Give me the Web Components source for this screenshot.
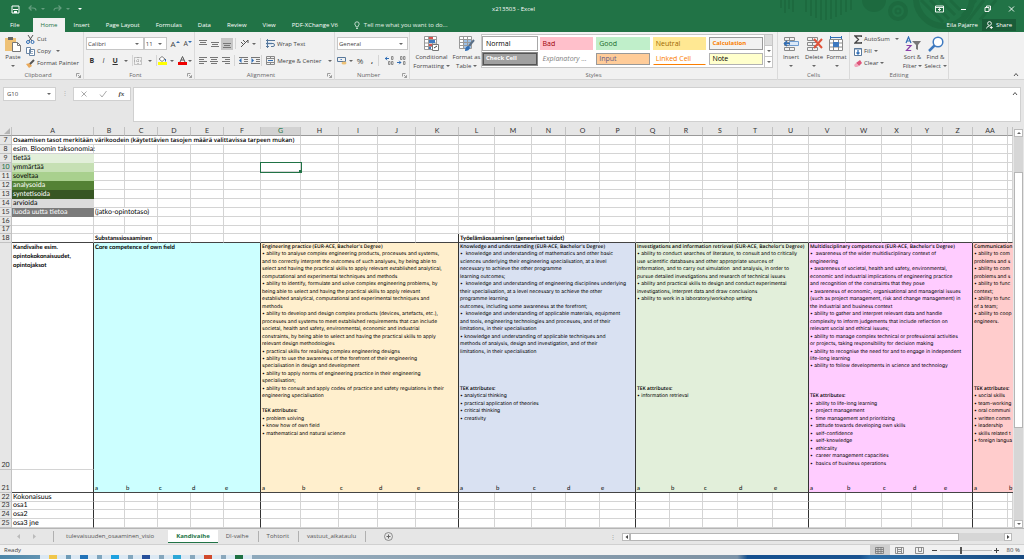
<!DOCTYPE html>
<html lang="fi">
<head>
<meta charset="utf-8">
<title>x213503 - Excel</title>
<style>
html,body{margin:0;height:100%}
body{font-family:"Open Sans","Noto Sans",sans-serif;font-size:6px;line-height:8px;color:#444;background:#e6e6e6;overflow:hidden}
</style>
</head>
<body>
<excel-app></excel-app>
<script>
const define = (name, css, html) => customElements.define(name, class extends HTMLElement {
  constructor() {
    super();
    const root = this.attachShadow({ mode: 'open' });
    const t = document.createElement('template');
    t.innerHTML = '<style>*{box-sizing:border-box}button,input,select{font:inherit;color:inherit;background:none;border:0;margin:0;padding:0;border-radius:0;outline:0}svg{display:block;flex:none}' + css + '</style>' + (typeof html === 'function' ? html(this) : html);
    root.append(t.content.cloneNode(true));
  }
});
const svg = (w, h, body, slot) => `<svg ${slot ? 'slot="icon" ' : ''}width="${w}" height="${h}" viewBox="0 0 ${w} ${h}" fill="none" aria-hidden="true">${body}</svg>`;
const lines = (c, list) => `<path stroke="${c}" d="${list.map(([x, y, w]) => `M${x} ${y}.5h${w}`).join('')}"/>`;

/* ---------- small parts ---------- */
define('down-caret', ':host{display:inline-block;border:solid transparent;border-width:2px 2px 0;border-top-color:#666;width:0;height:0;flex:none;vertical-align:middle}', '');

define('big-button',
  ':host{display:block}button{display:flex;flex-direction:column;align-items:center;width:100%;padding-top:4px;line-height:9px;text-align:center;white-space:nowrap;gap:1px}',
  '<button type="button"><slot name="icon"></slot><span><slot></slot></span></button>');

define('tool-button',
  ':host{display:flex;align-items:center;height:12px}button{display:flex;align-items:center;gap:2px;height:12px;white-space:nowrap}:host([trailing]) button{flex-direction:row-reverse;gap:0}',
  '<button type="button"><slot name="icon"></slot><slot></slot></button>');

define('ribbon-group',
  ':host{display:flex;flex-direction:column;border-right:1px solid #dadada;height:48px}div{flex:1;display:flex;min-height:0}footer{height:9px;line-height:9px;text-align:center;color:#666;display:flex;align-items:center}span{flex:1;white-space:nowrap}svg{margin-right:2px}',
  el => `<div><slot></slot></div><footer><span>${el.getAttribute('label')}</span>${el.hasAttribute('launcher') ? svg(5, 5, '<path stroke="#888" stroke-width=".8" d="M.5 3.500V.5H3.500M2 2l2.500 2.500M4.500 2.200V4.500H2.200"/>') : ''}</footer>`);

define('combo-box',
  ':host{display:flex;height:13px;background:#fff;border:1px solid #c6c6c6;align-items:center;padding-right:4px}select{appearance:none;flex:1;min-width:0;padding-left:1px;height:11px}',
  el => `<select aria-label="${el.getAttribute('label')}"><option>${el.getAttribute('value')}</option></select><down-caret></down-caret>`);

/* ---------- title bar ---------- */
define('title-bar', `
:host{display:flex;height:18px;align-items:center;color:#fff;position:relative}
.q,.w{flex:1;display:flex;align-items:center}
.q{padding-left:11px;gap:8px}.w{justify-content:flex-end;gap:15px;padding-right:8px}
.u{display:flex;align-items:center;gap:4px;opacity:.3}
.u down-caret,.q>down-caret{border-top-color:#fff}
h1{font:inherit;margin:0}button{display:flex}`, `
<div class="q">
<button type="button" aria-label="Save">${svg(9, 9, '<path stroke="#fff" d="M1 1h7v7H1z"/><path fill="#fff" d="M2 4h5v1H2zM3 6h3v2H3z"/>')}</button>
<button class="u" type="button" aria-label="Undo">${svg(9, 8, '<path stroke="#fff" stroke-width="1.200" d="M1 3h4q3 0 3 2.500M3.500.5L1 3l2.500 2.500"/>')}<down-caret></down-caret></button>
<button class="u" type="button" aria-label="Redo">${svg(9, 8, '<path stroke="#fff" stroke-width="1.200" d="M8 3H4q-3 0-3 2.500M5.500.5L8 3 5.500 5.500"/>')}<down-caret></down-caret></button>
<down-caret></down-caret></div>
<h1>x213503 - Excel</h1>
<div class="w">
<button type="button" aria-label="Ribbon options">${svg(9, 8, '<path stroke="#fff" stroke-width=".9" d="M.5 1h8v6h-8zM.5 2.500h8M4.500 6V3.500M3 5l1.500-1.500L6 5"/>')}</button>
<button type="button" aria-label="Minimise">${svg(9, 8, '<path stroke="#fff" d="M2 4.500h5"/>')}</button>
<button type="button" aria-label="Restore">${svg(9, 8, '<path stroke="#fff" stroke-width=".9" d="M2 2.500h4v4H2zM3.500 2.500V1h4v4H6"/>')}</button>
<button type="button" aria-label="Close">${svg(9, 8, '<path stroke="#fff" stroke-width=".9" d="M2 1.500l5 5M7 1.500l-5 5"/>')}</button></div>`);

define('ribbon-tabs', `
:host{display:flex;height:14px;align-items:stretch;color:#fff;position:relative;line-height:14px;padding-right:8px}
button{padding:0 8px;white-space:nowrap}
.f{padding:0 13px 0 10px}.on{background:#f1f1f1;color:#217346;padding:0 8px}
.tell{display:flex;align-items:center;gap:4px;flex:1;color:#e2efe7}
.s{background:#1a5c38;display:flex;align-items:center;gap:3px;margin:1px 0 1px 4px;padding:0 4px}`, `
<button class="f" type="button">File</button><button class="on" type="button">Home</button>
${['Insert', 'Page Layout', 'Formulas', 'Data', 'Review', 'View', 'PDF-XChange V6'].map(t => `<button type="button">${t}</button>`).join('')}
<button class="tell" type="button">${svg(6, 9, '<path stroke="#e2efe7" stroke-width=".8" d="M2 6V5Q.8 4 .8 3a2.200 2.200 0 014.400 0Q5.200 4 4 5v1zM2 7.500h2"/>')}Tell me what you want to do...</button>
<button type="button" style="padding-right:0">Eila Pajarre</button>
<button class="s" type="button">${svg(7, 8, '<circle cx="3.500" cy="2.500" r="1.900" stroke="#fff" stroke-width=".9"/><path stroke="#fff" stroke-width=".9" d="M.5 7.500Q1 5 3.500 5M3.800 6.500h3M5.300 5v3"/>')}Share</button>`);

define('app-header', `
:host{display:block;background:#217346;position:relative}
svg.art{position:absolute;right:0;top:0}`, `
<svg class="art" width="260" height="32" viewBox="764 0 260 32" fill="none" stroke="#1d6a3f" aria-hidden="true">
<path stroke-width="2" d="M781 0v8M785 0v13M789 0v9M793 0v12M806 0v12M811 0v16M816 0v18M821 0v20M826 0v20M831 0v19M836 0v17M841 0v15M846 0v12M851 0v10"/>
<path fill="#1d6a3f" stroke="none" d="M862 0h24a12 12 0 01-24 0z"/><circle cx="898" cy="11" r="8" stroke-width="4"/><circle cx="898" cy="11" r="2.500" stroke-width="2"/>
<circle cx="944" cy="-2" r="28" stroke-width="6"/><path stroke-width="3" d="M921 0l22 22M930 0l19 19M940 0l15 15M950 0l10 10"/>
<path stroke-width="3" d="M976 0l-14 16M984 0l-20 26M996 0l-16 20"/></svg>
<title-bar></title-bar><ribbon-tabs></ribbon-tabs>`);

/* ---------- ribbon ---------- */
const gridIcon = (extra) => svg(17, 16, '<path stroke="#8a8a8a" d="M1.500 1.500h10v3h-10zM6.500 1.500v3M1.500 11.500h10v3h-10zM6.500 11.500v3M1.500 6.500h10v3h-10zM6.500 6.500v3"/>' + extra, 1);
define('style-gallery', `
:host{display:flex;flex:1;height:34px;margin:2px 4px 0 1px;border:1px solid #c6c6c6;background:#fff}
.g{flex:1;display:grid;grid-template-columns:repeat(5,1fr);gap:3px;padding:2px 1px;font-size:7px}
.g button{text-align:left;padding-left:2px;line-height:9px;white-space:nowrap;border:1px solid transparent;overflow:hidden}
.n{outline:1px solid #a8a8a8;color:#000}.bad{background:#ffc0cb;color:#9c0006}.good{background:#c0efca;color:#1b6b2a}.neu{background:#ffe893;color:#9c6500}
.g .cal{background:#f2f2f2;color:#fa7d00;border-color:#9a9a9a;font-weight:bold;font-size:6px}
.g .chk{background:#a0a0a0;color:#fff;border-color:#555;outline:1px solid #888;font-weight:bold;font-size:6px}
.exp{font-style:italic;color:#7f7f7f;font-size:7px}.g .inp{background:#ffcc99;color:#5f5a86;border-color:#999}
.g .lnk{color:#fa7d00;border-bottom-color:#fa7d00}.g .nte{background:#ffffcc;border-color:#b2b2b2;color:#000}
.s{width:8px;border-left:1px solid #c6c6c6;display:flex;flex-direction:column}
.s button{flex:1;display:flex;align-items:center;justify-content:center;border-bottom:1px solid #c6c6c6}
.s button:first-child{background:#ddd}.s button:last-child{border:0}`, `
<div class="g">${[['n', 'Normal'], ['bad', 'Bad'], ['good', 'Good'], ['neu', 'Neutral'], ['cal', 'Calculation'], ['chk', 'Check Cell'], ['exp', 'Explanatory ...'], ['inp', 'Input'], ['lnk', 'Linked Cell'], ['nte', 'Note']].map(([c, t]) => `<button type="button" class="${c}">${t}</button>`).join('')}</div>
<div class="s"><button type="button" aria-label="Previous styles"></button><button type="button" aria-label="Next styles"><down-caret></down-caret></button><button type="button" aria-label="More styles"><down-caret></down-caret></button></div>`);

define('excel-ribbon', `
:host{display:flex;background:#f1f1f1;height:48px;border-bottom:1px solid #d5d5d5}
.clip{width:84px}.font{width:111px}.al{width:140px}.num{width:75px}.sty{flex:1}.cells{width:72px}.edit{width:99px}
.tail{width:75px;display:flex;align-items:flex-end;justify-content:flex-end;padding:0 5px 2px}
.col{display:flex;flex-direction:column;padding-top:1px}
.rows{flex:1;display:flex;flex-direction:column;padding:5px 2px 0 2px;gap:4px;min-width:0}
.r{display:flex;align-items:center;height:13px}
i.v{width:1px;height:11px;background:#d5d5d5}
b.t,em.t,u.t{font-size:7px;width:12px;text-align:center;color:#333}
.w12{width:12px;display:flex;justify-content:center}`, `
<ribbon-group class="clip" label="Clipboard" launcher>
<big-button style="width:26px">${svg(16, 16, '<path fill="#eec176" d="M0 2h11v13H0z"/><path fill="#666" d="M3 1h5v3H3z"/><path fill="#fff" stroke="#777" d="M7.500 6.500h5l3 3v6h-8z"/><path stroke="#777" d="M12.500 6.500v3h3"/>', 1)}Paste<br><down-caret></down-caret></big-button>
<div class="col">
<tool-button>${svg(9, 9, '<path stroke="#555" d="M2 0l4 6M7 0L3 6"/><circle cx="2" cy="7" r="1.500" stroke="#2f6db5"/><circle cx="6.500" cy="7" r="1.500" stroke="#2f6db5"/>', 1)}Cut</tool-button>
<tool-button>${svg(9, 9, '<path fill="#fff" stroke="#6a86a5" d="M.5.5h4v6h-4zM3.500 2.500h5v6h-5z"/><path stroke="#6a86a5" stroke-width=".7" d="M5 4.500h2M5 6.500h2"/>', 1)}Copy&nbsp;&nbsp;<down-caret></down-caret></tool-button>
<tool-button>${svg(9, 9, '<path fill="#e9a95b" d="M0 5l4-1 2 3-3 2z"/><path stroke="#555" stroke-width="2" d="M4 5l4-4"/>', 1)}Format Painter</tool-button></div>
</ribbon-group>
<ribbon-group class="font" label="Font" launcher><div class="rows">
<div class="r"><combo-box label="Font" value="Calibri" style="width:59px"></combo-box><combo-box label="Font size" value="11" style="width:23px"></combo-box>
<tool-button trailing style="margin-left:4px;font-size:8px">${svg(4, 8, '<path fill="#2f6db5" d="M0 3l2-2 2 2z"/>', 1)}A</tool-button><tool-button trailing style="margin-left:4px;font-size:7px">${svg(4, 8, '<path fill="#2f6db5" d="M0 1h4L2 3z"/>', 1)}A</tool-button></div>
<div class="r"><b class="t">B</b><em class="t">I</em><u class="t"><b>U</b></u><span class="w12" style="width:11px"><down-caret></down-caret></span><i class="v"></i>
<span class="w12">${svg(8, 8, '<path stroke="#999" stroke-dasharray="1 1" d="M.5.5h7v7h-7zM4 0v8M0 4h8"/>')}</span><span class="w12"><down-caret></down-caret></span><i class="v"></i>
<span class="w12">${svg(9, 9, '<path fill="#fff" stroke="#666" stroke-width=".8" d="M1 3l3-2.500L7 3 4 5.500z"/><path stroke="#2f6db5" d="M7.500 3v2.500"/><path fill="#ff0" d="M0 6h9v3H0z"/>')}</span><span class="w12" style="width:8px"><down-caret></down-caret></span>
<span class="w12">${svg(9, 9, '<path stroke="#555" d="M2 6l2.500-5.500L7 6M3 4h3"/><path fill="#e00" d="M0 6h9v3H0z"/>')}</span><down-caret></down-caret></div>
</div></ribbon-group>
<ribbon-group class="al" label="Alignment" launcher><div class="rows">
<div class="r"><span class="w12">${svg(8, 8, lines('#777', [[0, 0, 8], [1, 2, 6], [0, 4, 8]]))}</span><span class="w12">${svg(8, 8, lines('#777', [[0, 2, 8], [1, 4, 6], [0, 6, 8]]))}</span><span class="w12" style="background:#c6c6c6;height:12px;align-items:center">${svg(8, 8, lines('#777', [[0, 3, 8], [1, 5, 6], [0, 7, 8]]))}</span>
<i class="v" style="margin:0 4px 0 2px"></i>${svg(9, 9, '<path stroke="#555" d="M1 8l7-7M8 1v3M1 3l3 3M3 1l3 3"/>')}<span class="w12" style="width:9px"><down-caret></down-caret></span><i class="v" style="margin:0 5px 0 2px"></i>
<tool-button>${svg(9, 9, '<path fill="#cfe0f2" d="M0 3h6v3H0z"/><path stroke="#58789b" d="M0 1.500h9M0 4.500h7q1.500 0 1.500 1.500T7 7.500H5M0 7.500h3M1.500 0v9"/>', 1)}Wrap Text</tool-button></div>
<div class="r"><span class="w12">${svg(8, 8, lines('#777', [[0, 0, 8], [0, 2, 5], [0, 4, 8], [0, 6, 5]]))}</span><span class="w12">${svg(8, 8, lines('#777', [[0, 0, 8], [1, 2, 6], [0, 4, 8], [1, 6, 6]]))}</span><span class="w12">${svg(8, 8, lines('#777', [[0, 0, 8], [3, 2, 5], [0, 4, 8], [3, 6, 5]]))}</span>
<i class="v" style="margin:0 3px 0 2px"></i><span class="w12">${svg(9, 8, lines('#777', [[0, 0, 9], [5, 2, 4], [5, 4, 4], [0, 6, 9]]) + '<path fill="#2f6db5" d="M0 3.500L2.500 1v5z"/>')}</span><span class="w12">${svg(9, 8, lines('#777', [[0, 0, 9], [5, 2, 4], [5, 4, 4], [0, 6, 9]]) + '<path fill="#2f6db5" d="M3 3.500L.5 1v5z"/>')}</span><i class="v" style="margin:0 4px 0 0"></i>
<tool-button>${svg(9, 9, '<path stroke="#888" d="M.5.5h8v8h-8zM0 2.500h9M0 6.500h9M4.500 0v2.500M4.500 6.500V9"/><path stroke="#2f6db5" d="M2 4.500h5"/>', 1)}Merge &amp; Center&nbsp;&nbsp;&nbsp;<down-caret></down-caret></tool-button></div>
</div></ribbon-group>
<ribbon-group class="num" label="Number" launcher><div class="rows" style="padding-right:1px">
<combo-box label="Number format" value="General"></combo-box>
<div class="r">${svg(10, 9, '<path stroke="#58789b" d="M.5 1.500h8v4h-8z"/><path fill="#fff" stroke="#2f6db5" stroke-width=".8" d="M3.500 3.500h1.500"/><ellipse cx="7" cy="7" rx="2.500" ry="1.500" fill="#eec176"/>')}<span class="w12" style="width:7px"><down-caret></down-caret></span><span class="w12" style="font-size:8px">%</span><b class="t">,</b><i class="v" style="margin-right:4px"></i>
<span class="w12">${svg(9, 9, '<path stroke="#2f6db5" d="M0 2.500h4M2 .8L.4 2.500 2 4.200"/><path stroke="#777" stroke-width=".8" d="M6.500.5h1.500v3H6.500zM3.500 5.500h1.500v3H3.500zM6.500 5.500h1.500v3H6.500z"/>')}</span><span class="w12">${svg(9, 9, '<path stroke="#2f6db5" d="M0 6.500h4M2.200 4.800l1.600 1.700-1.600 1.700"/><path stroke="#777" stroke-width=".8" d="M3.500.5h1.500v3H3.500zM6.500.5h1.500v3H6.500zM6.500 5.500h1.500v3H6.500z"/>')}</span></div>
</div></ribbon-group>
<ribbon-group class="sty" label="Styles">
<big-button style="width:43px">${svg(17, 16, '<path fill="#fff" stroke="#999" d="M1.500.5h12v13h-12zM5.500 0v14M9.500 0v14M1 3.500h13M1 7h13M1 10.500h13"/><path fill="#d9534f" d="M6 1h4v2H6zM6 8h3v2H6z"/><path fill="#3f7ac0" d="M6 4h6v3H6zM6 11h2v2H6z"/><path fill="#fff" stroke="#777" d="M9.500 8.500h6v6h-6z"/><path stroke="#444" d="M11 12l3-2"/>', 1)}Conditional<br>Formatting <down-caret></down-caret></big-button>
<big-button style="width:27px">${svg(17, 16, '<path fill="#fff" stroke="#999" d="M1.500.5h12v12h-12z"/><path fill="#9dc0e6" d="M5 4h8v8H5z"/><path stroke="#999" d="M5.500 0v13M9.500 0v13M1 3.500h13M1 6.500h13M1 9.500h13"/><path stroke="#5a6f87" stroke-width="2" d="M16 4l-5 6"/><path fill="#2f6db5" d="M7 15q0-5 4-5l1 2q-1 3-5 3z"/>', 1)}Format as<br>Table <down-caret></down-caret></big-button>
<style-gallery></style-gallery>
</ribbon-group>
<ribbon-group class="cells" label="Cells">
<big-button style="width:24px;margin-left:1px">${gridIcon('<path fill="#dbe9f8" stroke="#6f9cd0" d="M6.500 5.500h9v4h-9z"/><path stroke="#2f6db5" stroke-width="1.500" d="M1 7.500h6M4 5L1.500 7.500 4 10"/>')}Insert<br><down-caret></down-caret></big-button>
<big-button style="width:22px">${gridIcon('<path stroke="#e0533a" stroke-width="2" d="M8 3l8 9M16 3l-8 9"/>')}Delete<br><down-caret></down-caret></big-button>
<big-button style="width:23px">${svg(17, 16, '<path fill="#fff" stroke="#8a8a8a" d="M1.500 3.500h13v11h-13zM5.500 3v12M10.500 3v12M1 7h14M1 11h14"/><path fill="#3f7ac0" d="M5 6h6v5H5z"/><path stroke="#2f6db5" d="M2 1.500h12M2.500 0v3M13.500 0v3"/>', 1)}Format<br><down-caret></down-caret></big-button>
</ribbon-group>
<ribbon-group class="edit" label="Editing">
<div class="col" style="width:51px;padding-left:4px">
<tool-button>${svg(8, 9, '<path stroke="#444" stroke-width="1.300" d="M7.500 2V1H1l3.500 3.500L1 8h6.500V7"/>', 1)}AutoSum&nbsp;&nbsp;<down-caret></down-caret></tool-button>
<tool-button>${svg(8, 9, '<path fill="#fff" stroke="#58789b" d="M.5 1.500h7v7h-7zM0 2h8"/><path stroke="#2f6db5" stroke-width="1.300" d="M4 3v4M2.500 5.500L4 7l1.500-1.500"/>', 1)}Fill <down-caret></down-caret></tool-button>
<tool-button>${svg(8, 9, '<path fill="#e0557b" d="M2 4l4-3 2 3-3 3z"/><path fill="#f0a9bd" d="M0 6l2-2 3 3-2 1H1z"/>', 1)}Clear <down-caret></down-caret></tool-button></div>
<big-button style="width:23px">${svg(16, 16, '<path stroke="#2f6db5" stroke-width="1.200" d="M1 7l2.500-6L6 7M2 5h3"/><path stroke="#8b3fa8" stroke-width="1.200" d="M1.500 9.500H6L1.500 14.500H6.200"/><path fill="#777" d="M7 5h9l-3 4v5l-2-1V9z"/>', 1)}Sort &amp;<br>Filter <down-caret></down-caret></big-button>
<big-button style="width:23px">${svg(16, 16, '<circle cx="10" cy="6" r="4.800" fill="#fff" stroke="#3f7ac0" stroke-width="1.500"/><path stroke="#3f7ac0" stroke-width="2.500" d="M6.500 9.500L1 15"/>', 1)}Find &amp;<br>Select <down-caret></down-caret></big-button>
</ribbon-group>
<div class="tail">${svg(6, 5, '<path stroke="#555" d="M1 4l2-2.500L5 4"/>')}</div>`);

/* ---------- formula bar ---------- */
define('formula-bar', `
:host{display:flex;align-items:flex-start;padding:7px 3px 5px;color:#444}
.n{width:53px;height:14px;background:#fff;border:1px solid #d0d0d0;display:flex;align-items:center;padding:0 4px 0 3px}
.n input{flex:1;min-width:0}.d{width:17px;text-align:center;line-height:13px;color:#aaa}
.b{width:58px;height:14px;background:#fff;border:1px solid #d0d0d0;display:flex;justify-content:space-around;align-items:center}
.b button:last-child{font:italic 7px/9px "Liberation Serif",serif}
.f{flex:1;margin-left:2px;height:35px;background:#fff;border:1px solid #d0d0d0;display:flex;padding-right:2px}
.f input{flex:1}.f svg{margin-top:3px}`, `
<div class="n"><input aria-label="Name box" value="G10"><down-caret></down-caret></div><span class="d">⋮</span>
<div class="b"><button type="button" aria-label="Cancel">${svg(8, 8, '<path stroke="#aaa" d="M1.500 1.500l5 5M6.500 1.500l-5 5"/>')}</button><button type="button" aria-label="Enter">${svg(8, 8, '<path stroke="#aaa" d="M1 4.500L3 7l4.500-6"/>')}</button><button type="button" aria-label="Insert function"><b>fx</b></button></div>
<div class="f"><input aria-label="Formula">${svg(6, 5, '<path stroke="#555" d="M1 4l2-2.500L5 4"/>')}</div>`);

/* ---------- worksheet ---------- */
const COLS = [['', 12], ['A', 82], ['B', 31], ['C', 33], ['D', 33], ['E', 33], ['F', 37], ['G', 40], ['H', 38], ['I', 39], ['J', 38], ['K', 43], ['L', 36], ['M', 37], ['N', 34], ['O', 34], ['P', 36], ['Q', 34], ['R', 33], ['S', 35], ['T', 35], ['U', 36], ['V', 37], ['W', 36], ['X', 30], ['Y', 31], ['Z', 30], ['AA', 35], ['', 5]];
const EDGES = new Set([1, 6, 11, 16, 21, 26]);
const LEVELS = [['tietää', '#e2efda', '#000'], ['ymmärtää', '#c6e0b4', '#000'], ['soveltaa', '#a9d08e', '#000'], ['analysoida', '#548235', '#fff'], ['syntetisoida', '#375623', '#fff'], ['arvioida', '#dbdbdb', '#000'], ['luoda uutta tietoa', '#7b7b7b', '#fff']];
const AREAS = [
  { span: 5, color: '#ccffff', text: '' },
  { span: 5, color: '#ffefcd', text: `#Engineering practice (EUR-ACE, Bachelor's Degree)
• ability to analyse complex engineering products, processes and systems,
and to correctly interpret the outcomes of such analyses, by being able to
select and having the practical skills to apply relevant established analytical,
computational and experimental techniques and methods
• ability to identify, formulate and solve complex engineering problems, by
being able to select and having the practical skills to apply relevant
established analytical, computational and experimental techniques and
methods
• ability to develop and design complex products (devices, artefacts, etc.),
processes and systems to meet established requirements that can include
societal, health and safety, environmental, economic and industrial
constraints, by being able to select and having the practical skills to apply
relevant design methodologies
• practical skills for realising complex engineering designs
• ability to use the awareness of the forefront of their engineering
specialisation in design and development
• ability to apply norms of engineering practice in their engineering
specialisation;
• ability to consult and apply codes of practice and safety regulations in their
engineering specialisation

#TEK attributes:
• problem solving
• know how of own field
• mathematical and natural science` },
  { span: 5, color: '#d9e1f2', text: `#Knowledge and understanding (EUR-ACE, Bachelor's Degree)
•  knowledge and understanding of mathematics and other basic
sciences underlying their engineering specialisation, at a level
necessary to achieve the other programme
learning outcomes;
•  knowledge and understanding of engineering disciplines underlying
their specialisation, at a level necessary to achieve the other
programme learning
outcomes, including some awareness at the forefront;
•  knowledge and understanding of applicable materials, equipment
and tools, engineering technologies and processes, and of their
limitations, in their specialisation
• knowledge and understanding of applicable techniques and
methods of analysis, design and investigation, and of their
limitations, in their specialisation




#TEK attributes:
• analytical thinking
• practical application of theories
• critical thinking
• creativity` },
  { span: 5, color: '#e2efda', text: `#Investigations and information retrieval (EUR-ACE, Bachelor's Degree)
• ability to conduct searches of literature, to consult and to critically
use scientific databases and other appropriate sources of
information, and to carry out simulation  and analysis, in order to
pursue detailed investigations and research of technical issues
• ability and practical skills to design and conduct experimental
investigations, interpret data and draw conclusions
• ability to work in a laboratory/workshop setting











#TEK attributes:
• information retrieval` },
  { span: 5, color: '#ffccff', text: `#Multidisciplinary competences (EUR-ACE, Bachelor's Degree)
•  awareness of the wider multidisciplinary context of
engineering
• awareness of societal, health and safety, environmental,
economic and industrial implications of engineering practice
and recognition of the constraints that they pose
• awareness of economic, organisational and managerial issues
(such as project management, risk and change management) in
the industrial and business context
• ability to gather and interpret relevant data and handle
complexity to inform judgements that include reflection on
relevant social and ethical issues;
• ability to manage complex technical or professional activities
or projects, taking responsibility for decision making
• ability to recognise the need for and to engage in independent
life-long learning
• ability to follow developments in science and technology



#TEK attributes:
•  ability to life-long learning
•  project management
•  time management and prioritizing
•  attitude towards developing own skills
•  self-confidence
•  self-knowledge
•  ethicality
•  career management capacities
•  basics of business operations` },
  { span: 2, color: '#ffcccc', text: `#Communication
• ability to com
problems and s
• ability to com
problems and s
• ability to func
context;
• ability to func
of a team;
• ability to coop
engineers.








#TEK attributes:
• social skills
• team-working
• oral communi
• written comm
• leadership
• skills related t
• foreign langua` }];

const plainRow = (n, cells = {}) => {
  let out = `<tr class="r${n}"><th scope="row">${n}</th>`;
  for (let c = 1; c < COLS.length;) {
    const d = cells[c] || {}, span = d.span || 1, last = c + span - 1;
    out += `<td class="${d.cls || ''}${n > 21 && EDGES.has(last) || n === 18 && last === 11 ? ' e' : ''}"${span > 1 ? ` colspan="${span}"` : ''}${d.style ? ` style="${d.style}"` : ''}>${d.t || ''}</td>`;
    c += span;
  }
  return out + '</tr>';
};
const note = a => a.text.split('\n').map(l => l[0] === '#' ? `<b>${l.slice(1)}</b>` : `<span>${l}</span>`).join('');
const buildTable = () => {
  let rows = plainRow(7, { 1: { span: 7, cls: 'h', t: 'Osaamisen tasot merkitään värikoodein (käytettävien tasojen määrä valittavissa tarpeen mukan)' } });
  rows += plainRow(8, { 1: { t: 'esim. Bloomin taksonomia:' } });
  LEVELS.forEach(([t, bg, fg], i) => {
    const cells = { 1: { t, style: `background:${bg};color:${fg};border-color:${bg}` } };
    if (i === 1) cells[7] = { cls: 'sel' };
    if (i === 6) cells[2] = { span: 2, t: '(jatko-opintotaso)' };
    rows += plainRow(9 + i, cells);
  });
  rows += plainRow(16) + plainRow(17);
  rows += plainRow(18, { 2: { span: 2, cls: 'b', t: 'Substanssiosaaminen' }, 12: { span: 4, cls: 'b', t: 'Työelämäosaaminen (geneeriset taidot)' } });
  rows += '<tr class="r20"><th scope="row">20</th><td class="b e top">Kandivaihe esim.<br>opintokokonaisuudet,<br>opintojaksot</td>' + AREAS.map((a, i) =>
    `<td class="area top${i < 5 ? ' e' : ''}" colspan="${a.span}" style="background:${a.color}">${i ? `<div class="note">${note(a)}</div>` : '<b class="core">Core competence of own field</b>'}</td>`).join('') + '</tr>';
  rows += '<tr class="r21"><th scope="row">21</th><td class="e"></td>' + AREAS.map((a, i) =>
    [...'abcde'].slice(0, a.span).map((l, k) => `<td class="area${k === 4 ? ' e' : ''}" style="background:${a.color}">${l}</td>`).join('')).join('') + '</tr>';
  ['Kokonaisuus', 'osa1', 'osa2', 'osa3 jne'].forEach((t, i) => rows += plainRow(22 + i, { 1: { t } }));
  return `<table><colgroup>${COLS.map(c => `<col style="width:${c[1]}px">`).join('')}</colgroup><thead><tr>${COLS.map(([n], i) => `<th scope="col"${n === 'G' ? ' class="on"' : ''}>${i ? n : svg(11, 8, '<path fill="#b5b5b5" d="M10 1v6H4z"/>')}</th>`).join('')}</tr></thead><tbody>${rows}</tbody></table>`;
};
define('sheet-grid', `
:host{display:block;overflow:hidden;font-family:Lato,"Open Sans",sans-serif;font-size:7px;line-height:7px;color:#000;flex:1;min-width:0;text-rendering:geometricPrecision}
table{table-layout:fixed;width:100%;border-collapse:separate;border-spacing:0;background:#fff}
th,td{padding:0 0 0 1px;height:9px;border:solid #d4d4d4;border-width:0 1px 1px 0;white-space:nowrap;vertical-align:bottom;text-align:left}
th{background:#e6e6e6;font-weight:normal;text-align:center;color:#333;padding:0;border-color:#c2c2c2}
th.on,.r10 th{background:#d2d2d2;color:#217346}
thead th{border-bottom-color:#999}
.h{font:600 6px/8px "Open Sans",sans-serif}.b,.core{font-weight:bold;font-size:6px}
.r17 :is(td,th),.r23 :is(td,th){height:8px}
.r18 td,.r21 td{border-bottom-color:#444}
td.e{border-right-color:#333}
.top{vertical-align:top;line-height:9px}
.r20 :is(td,th){height:227px}.r21 :is(td,th){height:23px}
td.area{border-width:0;padding-left:0}td.area.e{border-right-width:1px}
.r21 td.area{border-bottom-width:1px;font-size:6px;padding-left:1px}
.note{display:grid;grid-template-rows:repeat(30,1fr);height:225px;padding:1px 0 0 1px;font:5px/7px Inter,"Open Sans",sans-serif;white-space:pre}
.note b{font-family:"Open Sans",sans-serif;font-weight:600}
.core{padding-left:1px}
.sel{outline:1px solid #217346;position:relative}
.sel::after{content:"";position:absolute;right:-2px;bottom:-2px;width:3px;height:3px;background:#217346}`, buildTable);

define('scroll-column', `
:host{display:flex;flex-direction:column;width:11px;padding:2px 1px 0;background:#e6e6e6}
button{height:8px;background:#fff;border:1px solid #bbb;display:flex;align-items:center;justify-content:center;flex:none}
.t{flex:1;background:#d6d6d6;padding-top:35px}.h{height:256px;background:#fff;border:1px solid #b5b5b5}
.up{transform:rotate(180deg)}`, `
<button type="button" aria-label="Scroll up"><down-caret class="up"></down-caret></button><div class="t"><div class="h"></div></div><button type="button" aria-label="Scroll down"><down-caret></down-caret></button>`);

/* ---------- bottom bars ---------- */
define('sheet-tabs', `
:host{display:flex;height:16px;align-items:center;background:#e6e6e6;border-top:1px solid #b5b5b5;padding-right:12px}
.nav{width:53px;display:flex;justify-content:center;gap:12px}
nav{display:flex;align-items:center;flex:1;min-width:0}
nav a{color:#555;text-decoration:none;padding:0 9px 0 8px;line-height:11px;border-right:1px solid #b0b0b0;white-space:nowrap}
nav a.x{border-left:1px solid #b0b0b0;border-right:0;padding:0 14px 0 12px}
nav a.on{background:#fff;color:#217346;font-weight:bold;line-height:12px;border:0;border-bottom:1px solid #217346;padding:0 8px}
nav button{margin-left:18px}
.sc{width:390px;display:flex;align-items:center;height:8px}
.sc button{width:8px;height:8px;background:#fff;border:1px solid #bbb;display:flex;align-items:center;justify-content:center}
.sc div{flex:1;background:#d6d6d6;display:flex}.sc i{width:88%;height:8px;background:#fff;border:1px solid #b5b5b5}
.dots{width:12px;color:#999}`, `
<div class="nav">${svg(4, 5, '<path fill="#bbb" d="M3 0v5L0 2.500z"/>')}${svg(4, 5, '<path fill="#bbb" d="M0 0v5l3-2.500z"/>')}</div>
<nav><a class="x" href="#">tulevaisuuden_osaaminen_visio</a><a class="on" href="#">Kandivaihe</a><a href="#">DI-vaihe</a><a href="#">Tohtorit</a><a href="#">vastuut_aikataulu</a>
<button type="button" aria-label="New sheet">${svg(9, 9, '<circle cx="4.500" cy="4.500" r="4" stroke="#777" stroke-width=".8"/><path stroke="#666" d="M4.500 2.500v4M2.500 4.500h4"/>')}</button></nav>
<span class="dots">⋮</span>
<div class="sc"><button type="button" aria-label="Scroll left">${svg(3, 4, '<path fill="#444" d="M3 0v4L.5 2z"/>')}</button><div><i></i></div><button type="button" aria-label="Scroll right">${svg(3, 4, '<path fill="#444" d="M0 0v4l2.500-2z"/>')}</button></div>`);

define('status-bar', `
:host{display:flex;height:11px;align-items:center;background:#f1f1f1;border-top:1px solid #d0d0d0;padding:0 4px}
span{flex:1}button{width:20px;height:10px;display:flex;align-items:center;justify-content:center}
.on{background:#cfcfcf}.z{width:10px}
input{appearance:none;width:52px;height:8px;background:linear-gradient(#bbb,#bbb) center/100% 1px no-repeat}
input::-webkit-slider-thumb{appearance:none;width:2px;height:7px;background:#555}
output{margin-left:5px}`, `
<span>Ready</span>
<button class="on" type="button" aria-label="Normal view">${svg(9, 7, '<path stroke="#777" stroke-width=".8" d="M.5.5h8v6h-8zM.5 2.500h8M.5 4.500h8M3 0v7M6 0v7"/>')}</button>
<button type="button" aria-label="Page layout view">${svg(9, 7, '<path stroke="#777" stroke-width=".8" d="M.5.5h8v6h-8zM2.500.5v6M6.500.5v6M3 2.500h3M3 4.500h3"/>')}</button>
<button type="button" aria-label="Page break view">${svg(9, 7, '<path stroke="#777" stroke-width=".8" d="M.5.5h8v6h-8zM3.500.5v4h3v-4"/>')}</button>
<button class="z" type="button" aria-label="Zoom out">${svg(5, 5, '<path stroke="#444" d="M0 2.500h5"/>')}</button>
<input type="range" aria-label="Zoom" min="0" max="100" value="40">
<button class="z" type="button" aria-label="Zoom in">${svg(5, 5, '<path stroke="#444" d="M0 2.500h5M2.500 0v5"/>')}</button><output>80 %</output>`);

define('task-strip', `
:host{display:flex;flex:1;min-height:4px;background:linear-gradient(90deg,#4d86a8 0,#7fa6bf 10%,#93aabb 30%,#8094a5 68%,#7c93a8 72%,#15508f 73%,#1a5390 84%,#2d6ea8 85%,#174a80 100%);gap:5px;padding-left:40px}
i{width:26px;background:#dbe8f3;display:flex;justify-content:center}i::after{content:"";width:8px;background:var(--c)}i:first-child{margin-right:63px}`,
  ['#f0c64a', '#2373b8', '#1fa2e0', '#27509b', '#2da7d6', '#d14a2c', '#1f7244'].map(c => `<i style="--c:${c}"></i>`).join(''));

define('excel-app', `
:host{display:flex;flex-direction:column;min-height:100vh}
main{display:flex}`, `
<app-header></app-header><excel-ribbon></excel-ribbon><formula-bar></formula-bar>
<main><sheet-grid></sheet-grid><scroll-column></scroll-column></main>
<sheet-tabs></sheet-tabs><status-bar></status-bar><task-strip></task-strip>`);
</script>
</body>
</html>
